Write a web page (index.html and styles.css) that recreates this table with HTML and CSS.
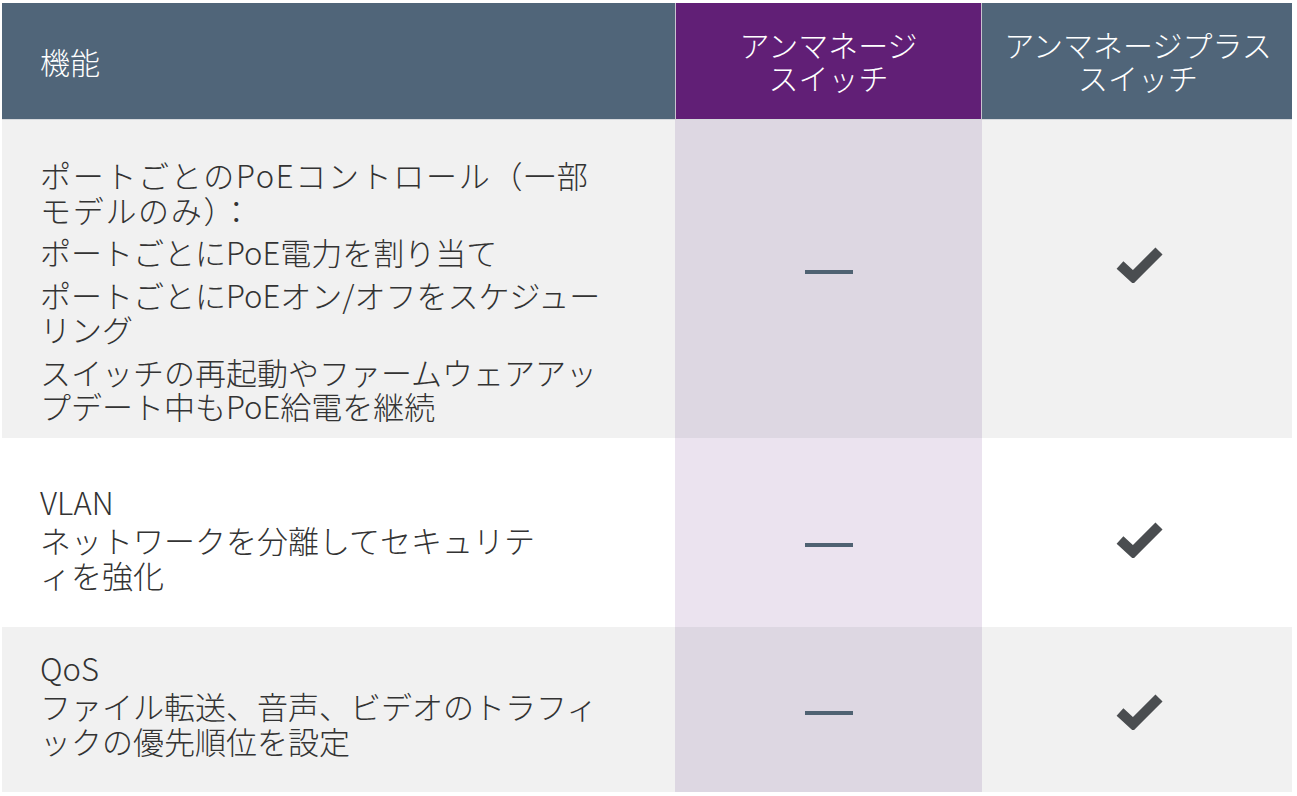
FILE: index.html
```html
<!DOCTYPE html>
<html lang="ja">
<head>
<meta charset="utf-8">
<title>機能比較</title>
<link rel="stylesheet" href="styles.css">
</head>
<body>
<div class="table">
  <div class="hcell hfeat">機能</div>
  <div class="hcell hmid">アンマネージ<br>スイッチ</div>
  <div class="hcell hright">アンマネージプラス<br>スイッチ</div>

  <div class="cell feat gray r1">
    <p class="line lead">ポートごとのPoEコントロール（一部<br>モデルのみ）：</p>
    <p class="line">ポートごとにPoE電力を割り当て</p>
    <p class="line">ポートごとにPoEオン/オフをスケジュー<br>リング</p>
    <p class="line">スイッチの再起動やファームウェアアッ<br>プデート中もPoE給電を継続</p>
  </div>
  <div class="cell mid gray r1-dash"><span class="dash"></span></div>
  <div class="cell right gray r1-check">
    <svg class="check" viewBox="0 0 48 36"><polyline points="4,18 17,30 43,4"/></svg>
  </div>

  <div class="cell feat white r2">
    <p class="title">VLAN</p>
    <p class="desc">ネットワークを分離してセキュリテ<br>ィを強化</p>
  </div>
  <div class="cell mid white r2-dash"><span class="dash"></span></div>
  <div class="cell right white r2-check">
    <svg class="check" viewBox="0 0 48 36"><polyline points="4,18 17,30 43,4"/></svg>
  </div>

  <div class="cell feat gray r3">
    <p class="title">QoS</p>
    <p class="desc">ファイル転送、音声、ビデオのトラフィ<br>ックの優先順位を設定</p>
  </div>
  <div class="cell mid gray r3-dash"><span class="dash"></span></div>
  <div class="cell right gray r3-check">
    <svg class="check" viewBox="0 0 48 36"><polyline points="4,18 17,30 43,4"/></svg>
  </div>
</div>
</body>
</html>
```

FILE: styles.css
```css
html, body {
  margin: 0;
  padding: 0;
  background: #ffffff;
}

body {
  font-family: "Noto Sans CJK JP", "Noto Sans", sans-serif;
  font-weight: 300;
  color: #333333;
}

.table {
  display: grid;
  grid-template-columns: 673px 307px 310px;
  grid-template-rows: 117px 318px 189px 165px;
  margin: 3px 0 0 2px;
  width: 1290px;
}

.hcell {
  display: flex;
  align-items: center;
  color: #ffffff;
  font-size: 30px;
  line-height: 33px;
  border-bottom: 1px solid #d6d9dd;
}

.hfeat {
  background: #506579;
  padding-left: 38px;
}

.hmid {
  background: #611f76;
  justify-content: center;
  text-align: center;
  border-left: 1px solid #c9c3cf;
  border-right: 1px solid #c9c3cf;
}

.hright {
  background: #506579;
  justify-content: center;
  text-align: center;
  padding-left: 2px;
}

.cell {
  display: flex;
}

.gray { background: #f1f1f1; }
.white { background: #ffffff; }

.mid.gray { background: #ddd7e2; }
.mid.white { background: #ebe3ef; }

.feat {
  flex-direction: column;
  align-items: flex-start;
  padding-left: 38px;
  font-size: 31px;
  white-space: nowrap;
}

.feat p {
  margin: 0;
}

.line {
  line-height: 34.5px;
}

.lead {
  letter-spacing: 1.7px;
}

.line + .line {
  margin-top: 8px;
}

.title {
  line-height: 35px;
}

.desc {
  line-height: 35px;
  margin-top: 3px !important;
}

.r1 { padding-top: 38px; }
.r2 { padding-top: 46px; }
.r3 { padding-top: 23px; }

.mid, .right {
  justify-content: center;
  align-items: center;
}

.right {
  padding-left: 6px;
}

.dash {
  display: block;
  width: 48px;
  height: 4px;
  background: #4f6272;
}

.check {
  width: 48px;
  height: 36px;
  fill: none;
  stroke: #4a4d50;
  stroke-width: 10;
  stroke-linejoin: miter;
  stroke-linecap: butt;
}

.r1-dash { padding-bottom: 14px; }
.r1-check { padding-bottom: 28px; }
.r2-dash { padding-top: 25px; }
.r2-check { padding-top: 15px; }
.r3-dash { padding-top: 7px; }
.r3-check { padding-top: 5px; }
```
